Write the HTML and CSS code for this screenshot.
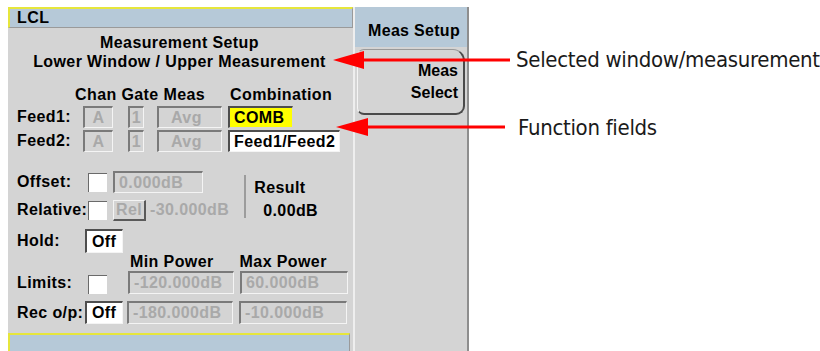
FILE: index.html
```html
<!DOCTYPE html>
<html>
<head>
  <meta charset="UTF-8">
  <title>Measurement Setup</title>
  <link rel="stylesheet" href="styles.css">
</head>
<body>

  <div class="figure">
    <div class="screen">

      <section class="panel">
        <div class="bar bar-top">LCL</div>

        <div class="title">
          <div>Measurement Setup</div>
          <div>Lower Window / Upper Measurement</div>
        </div>

        <div class="heads">
          <span class="h-chan">Chan Gate Meas</span>
          <span class="h-comb">Combination</span>
        </div>

        <div class="row feed">
          <span class="lbl">Feed1:</span>
          <span class="fld dis w-chan">A</span>
          <span class="fld dis w-gate">1</span>
          <span class="fld dis w-meas">Avg</span>
          <span class="fld comb">COMB</span>
        </div>
        <div class="row feed">
          <span class="lbl">Feed2:</span>
          <span class="fld dis w-chan">A</span>
          <span class="fld dis w-gate">1</span>
          <span class="fld dis w-meas">Avg</span>
          <span class="fld ratio">Feed1/Feed2</span>
        </div>

        <div class="offsets">
          <div class="offset-rows">
            <div class="row">
              <span class="lbl lbl-short">Offset:</span>
              <span class="check"></span>
              <span class="fld dis w-offset">0.000dB</span>
            </div>
            <div class="row row-rel">
              <span class="lbl lbl-short">Relative:</span>
              <span class="check"></span>
              <span class="btn-rel">Rel</span>
              <span class="dim">-30.000dB</span>
            </div>
          </div>
          <div class="sep"></div>
          <div class="result">
            <div>Result</div>
            <div class="result-val">0.00dB</div>
          </div>
        </div>

        <div class="row row-hold">
          <span class="lbl lbl-tog">Hold:</span>
          <span class="fld tog">Off</span>
        </div>

        <div class="heads heads-power">
          <span class="h-min">Min Power</span>
          <span class="h-max">Max Power</span>
        </div>

        <div class="row row-lim">
          <span class="lbl lbl-short">Limits:</span>
          <span class="check"></span>
          <span class="fld dis w-min">-120.000dB</span>
          <span class="fld dis w-max">60.000dB</span>
        </div>
        <div class="row row-rec">
          <span class="lbl lbl-tog">Rec o/p:</span>
          <span class="fld tog">Off</span>
          <span class="fld dis w-min">-180.000dB</span>
          <span class="fld dis w-max">-10.000dB</span>
        </div>

        <div class="bar bar-bottom"></div>
      </section>

      <aside class="keys">
        <div class="keys-head">Meas Setup</div>
        <div class="softkey">
          <span>Meas</span>
          <span>Select</span>
        </div>
      </aside>

    </div>

    <svg class="callouts" width="820" height="351" viewBox="0 0 820 351">
      <line x1="356" y1="60" x2="510" y2="60" stroke="#f00" stroke-width="3"/>
      <polygon points="333,60 364,51 364,69" fill="#f00"/>
      <line x1="360" y1="127" x2="505" y2="127" stroke="#f00" stroke-width="3"/>
      <polygon points="336,127 368,118 368,136" fill="#f00"/>
    </svg>
    <div class="note note-1">Selected window/measurement</div>
    <div class="note note-2">Function fields</div>
  </div>

</body>
</html>
```

FILE: styles.css
```css
* {
  margin: 0;
  padding: 0;
  box-sizing: border-box;
}

body {
  background: #fff;
  font-family: "Liberation Sans", Arial, sans-serif;
  color: #000;
}

.figure {
  position: relative;
  width: 820px;
  height: 351px;
  padding: 7px 0 0 8px;
  overflow: hidden;
}

.screen {
  display: flex;
  height: 344px;
}

/* left window */
.panel {
  width: 347px;
  background: #d4d4d4;
  border-right: 2px solid #eeeeee;
  font-size: 16px;
  font-weight: bold;
  letter-spacing: 0.4px;
  display: flex;
  flex-direction: column;
}

.panel > * {
  flex: none;
}

.bar {
  background: #b6c9d8;
  border-top: 2px solid #e6e63c;
  border-left: 2px solid #e6e63c;
  border-right: 1px solid #9a9a9a;
}

.bar-top {
  height: 21px;
  line-height: 18px;
  padding-left: 7px;
  border-bottom: 1px solid #9a9a9a;
}

.bar-bottom {
  margin-top: 9px;
  margin-right: 3px;
  height: 20px;
}

.title {
  margin-top: 5px;
  text-align: center;
  line-height: 19px;
  padding-right: 2px;
}

.heads {
  display: flex;
  margin-top: 15px;
  height: 18px;
  line-height: 18px;
}

.h-chan {
  margin-left: 67px;
  width: 155px;
}

.row {
  display: flex;
  align-items: center;
  height: 22px;
}

.feed {
  margin-top: 2px;
}

.lbl {
  width: 75px;
  padding-left: 9px;
  flex: none;
}

.lbl-short {
  width: 80px;
}

.lbl-tog {
  width: 77px;
}

.fld {
  height: 100%;
  display: flex;
  align-items: center;
  padding-left: 4px;
  border-top: 2px solid #4e4e4e;
  border-left: 2px solid #4e4e4e;
  border-bottom: 1px solid #f4f4f4;
  border-right: 1px solid #f4f4f4;
  flex: none;
  white-space: nowrap;
}

.dis {
  color: #a9a9a9;
  border-top-color: #7a7a7a;
  border-left-color: #7a7a7a;
}

.w-chan {
  width: 30px;
  justify-content: center;
  padding-left: 0;
}

.w-gate {
  width: 16px;
  margin-left: 15px;
  justify-content: center;
  padding-left: 0;
}

.w-meas {
  width: 65px;
  margin-left: 13px;
  padding-left: 12px;
}

.comb {
  width: 65px;
  margin-left: 6px;
  background: #ffff00;
  border-bottom-color: #d4d4d4;
  border-right-color: #d4d4d4;
}

.ratio {
  width: 112px;
  margin-left: 6px;
  background: #fff;
}

.check {
  width: 19px;
  height: 19px;
  background: #fff;
  border-top: 1px solid #6a6a6a;
  border-left: 1px solid #6a6a6a;
  flex: none;
}

.offsets {
  display: flex;
  margin-top: 19px;
}

.offset-rows .row + .row {
  margin-top: 6px;
}

.w-offset {
  width: 90px;
  margin-left: 6px;
}

.btn-rel {
  width: 33px;
  height: 21px;
  margin-left: 6px;
  display: flex;
  align-items: center;
  justify-content: center;
  color: #a9a9a9;
  border-top: 1px solid #f4f4f4;
  border-left: 1px solid #f4f4f4;
  border-bottom: 2px solid #5a5a5a;
  border-right: 2px solid #5a5a5a;
}

.dim {
  color: #a9a9a9;
  margin-left: 4px;
}

.sep {
  width: 2px;
  height: 43px;
  margin: 4px 0 0 15px;
  background: #9c9c9c;
}

.result {
  margin-left: 8px;
  padding-top: 5px;
  line-height: 23px;
}

.result-val {
  padding-left: 9px;
}

.row-hold {
  margin-top: 7px;
  height: 24px;
}

.tog {
  width: 38px;
  background: #fff;
  padding-left: 5px;
}

.heads-power {
  margin-top: 0;
  height: 17px;
  line-height: 17px;
}

.h-min {
  margin-left: 122px;
}

.h-max {
  margin-left: 26px;
}

.row-lim {
  margin-top: 1px;
  height: 23px;
}

.row-lim .check {
  align-self: flex-end;
}

.w-min {
  width: 106px;
  margin-left: 21px;
}

.row-rec .w-min {
  margin-left: 4px;
}

.w-max {
  width: 108px;
  margin-left: 6px;
}

.row-rec {
  margin-top: 7px;
  height: 23px;
}

/* softkey column */
.keys {
  width: 114px;
  background: #d4d4d4;
  border-right: 2px solid #8e8e8e;
  font-size: 16px;
  font-weight: bold;
}

.keys-head {
  height: 40px;
  background: #b6c9d8;
  text-align: right;
  padding: 15px 7px 0 0;
  line-height: 18px;
  letter-spacing: 0.3px;
}

.softkey {
  margin: 2px 2px 0 2px;
  height: 66px;
  display: flex;
  flex-direction: column;
  justify-content: center;
  align-items: flex-end;
  padding-right: 5px;
  line-height: 22px;
  border-top: 1px solid #9a9a9a;
  border-left: 1px solid #f4f4f4;
  border-bottom: 2px solid #4a4a4a;
  border-right: 2px solid #4a4a4a;
  border-radius: 7px 12px 9px 7px;
}

/* callouts */
.callouts {
  position: absolute;
  left: 0;
  top: 0;
}

.note {
  position: absolute;
  font-family: "DejaVu Sans Condensed", "DejaVu Sans", sans-serif;
  font-size: 22px;
  letter-spacing: -0.3px;
  line-height: 24px;
  color: #1a1a1a;
  white-space: nowrap;
}

.note-1 {
  left: 516px;
  top: 48px;
}

.note-2 {
  left: 518px;
  top: 116px;
}
```
